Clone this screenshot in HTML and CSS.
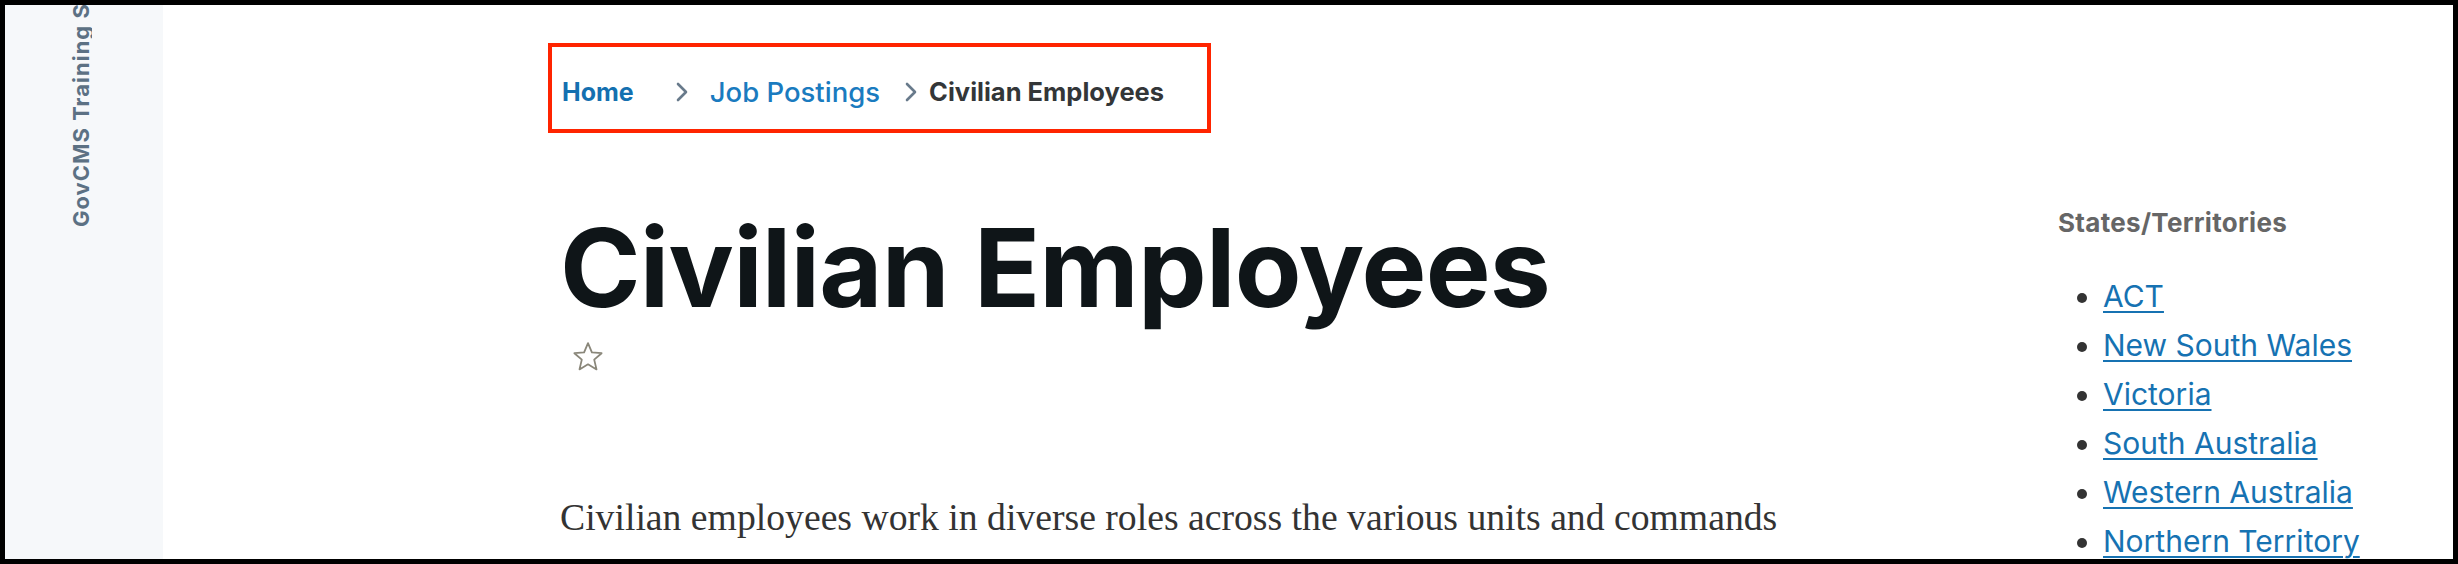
FILE: index.html
```html
<!DOCTYPE html>
<html lang="en">
<head>
<meta charset="utf-8">
<title>Civilian Employees</title>
<link rel="stylesheet" href="styles.css">
</head>
<body>
<div class="frame">
  <aside class="site-rail">
    <div class="site-name">GovCMS Training Site</div>
  </aside>
  <div class="page">
    <nav class="breadcrumb" aria-label="Breadcrumb">
      <a class="crumb crumb-home" href="#">Home</a>
      <span class="sep" aria-hidden="true"><svg viewBox="0 0 12 20" width="12" height="20"><path d="M2 2 L10 10 L2 18" fill="none" stroke="#687a8b" stroke-width="2.6" stroke-linecap="round" stroke-linejoin="round"/></svg></span>
      <a class="crumb crumb-link" href="#">Job Postings</a>
      <span class="sep sep-tight" aria-hidden="true"><svg viewBox="0 0 12 20" width="12" height="20"><path d="M2 2 L10 10 L2 18" fill="none" stroke="#687a8b" stroke-width="2.6" stroke-linecap="round" stroke-linejoin="round"/></svg></span>
      <span class="crumb crumb-current">Civilian Employees</span>
    </nav>
    <div class="layout">
      <main class="content">
        <h1 class="title">Civilian Employees</h1>
        <button class="fav" aria-label="Add to favourites">
          <svg viewBox="0 0 32 32" width="32" height="32"><path d="M16 2.2 L19.9 11.4 L29.6 12.2 L22.2 18.6 L24.5 28.4 L16 23.3 L7.5 28.4 L9.8 18.6 L2.4 12.2 L12.1 11.4 Z" fill="none" stroke="#8a877a" stroke-width="1.8" stroke-linejoin="round"/></svg>
        </button>
        <p class="lead">Civilian employees work in diverse roles across the various units and commands</p>
      </main>
      <aside class="states">
        <h2 class="states-title">States/Territories</h2>
        <ul class="states-list">
          <li><a href="#">ACT</a></li>
          <li><a href="#">New South Wales</a></li>
          <li><a href="#">Victoria</a></li>
          <li><a href="#">South Australia</a></li>
          <li><a href="#">Western Australia</a></li>
          <li><a href="#">Northern Territory</a></li>
        </ul>
      </aside>
    </div>
  </div>
</div>
</body>
</html>
```
FILE: styles.css
```css
* { box-sizing: border-box; }

html, body {
  margin: 0;
  padding: 0;
  background: #000;
}

.frame {
  width: 2458px;
  height: 564px;
  border: 5px solid #000;
  background: #fff;
  display: flex;
  overflow: hidden;
}

.site-rail {
  width: 158px;
  flex: none;
  background: #f6f8fa;
  display: flex;
  justify-content: center;
  padding-right: 6px;
}

.site-name {
  writing-mode: vertical-rl;
  transform: rotate(180deg);
  height: 222px;
  overflow: hidden;
  white-space: nowrap;
  font-family: Inter, "Liberation Sans", sans-serif;
  font-weight: 700;
  font-size: 22px;
  letter-spacing: 1px;
  color: #5c7184;
  line-height: 1;
}

.page {
  flex: 1;
  padding-left: 385px;
  min-width: 0;
}

.breadcrumb {
  margin-top: 38px;
  width: 663px;
  height: 90px;
  border: 4px solid #ff2400;
  display: flex;
  align-items: center;
  padding: 7px 8px 0 10px;
  font-family: Inter, "Liberation Sans", sans-serif;
}

.crumb {
  text-decoration: none;
  white-space: nowrap;
}

.crumb-home {
  font-weight: 700;
  font-size: 25px;
  color: #1470b0;
}

.crumb-link {
  font-weight: 500;
  font-size: 27.5px;
  color: #1a7bbf;
}

.crumb-current {
  font-weight: 700;
  font-size: 25.5px;
  color: #333638;
}

.sep {
  display: inline-flex;
  margin: 0 22px 0 42px;
}

.sep-tight {
  margin: 0 12px 0 25px;
}

.layout {
  display: flex;
}

.content {
  flex: 1;
  padding: 74px 0 0 12px;
}

.title {
  margin: 6px 0 0;
  font-family: Inter, "Liberation Sans", sans-serif;
  font-weight: 700;
  font-size: 109px;
  line-height: 1;
  letter-spacing: -0.8px;
  color: #0f1518;
}

.fav {
  display: block;
  margin: 19px 0 0 12px;
  padding: 0;
  border: 0;
  background: none;
  width: 32px;
  height: 32px;
}

.fav svg { display: block; }

.lead {
  margin: 119px 0 0;
  font-family: "Liberation Serif", serif;
  font-size: 37.7px;
  line-height: 51px;
  color: #333;
  white-space: nowrap;
}

.states {
  width: 395px;
  flex: none;
  padding-top: 74px;
  font-family: Inter, "Liberation Sans", sans-serif;
}

.states-title {
  margin: 0;
  font-size: 26px;
  font-weight: 700;
  line-height: 1.2;
  letter-spacing: 0.3px;
  color: #666;
}

.states-list {
  margin: 34px 0 0;
  padding-left: 45px;
  color: #333;
}

.states-list li {
  font-size: 30px;
  line-height: 49px;
}

.states-list a {
  color: #1672b2;
  text-decoration: underline;
  text-decoration-thickness: 2px;
  text-underline-offset: 4px;
}
```
